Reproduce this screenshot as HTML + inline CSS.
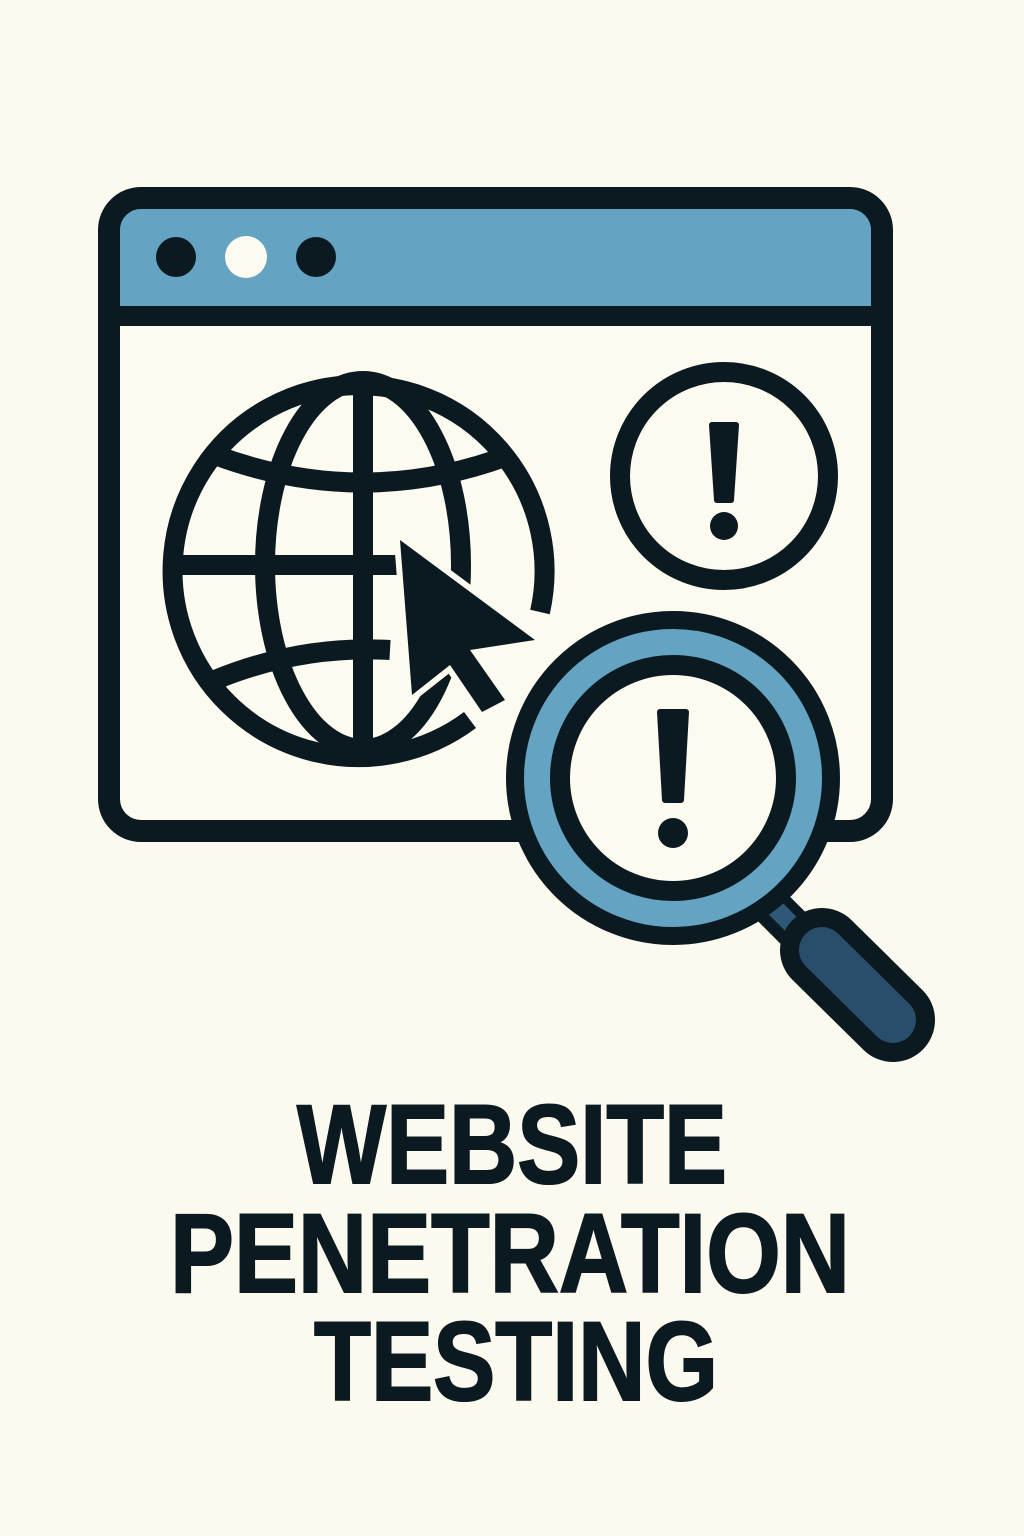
<!DOCTYPE html>
<html><head><meta charset="utf-8"><style>
html,body{margin:0;padding:0;background:#fcf9ee;}
svg{display:block}
</style></head><body>
<svg width="1024" height="1536" viewBox="0 0 1024 1536" xmlns="http://www.w3.org/2000/svg">
<rect width="1024" height="1536" fill="#fcf9ee"/>
<!-- browser window -->
<rect x="109" y="198" width="773" height="633" rx="32" fill="#fdfaf0"/>
<path d="M120 230 Q120 209 141 209 L850 209 Q871 209 871 230 L871 306 L120 306 Z" fill="#64a3c2"/>
<rect x="109" y="198" width="773" height="633" rx="32" fill="none" stroke="#0b1a20" stroke-width="22"/>
<line x1="109" y1="316" x2="882" y2="316" stroke="#0b1a20" stroke-width="20"/>
<circle cx="176" cy="257" r="20" fill="#0b1a20"/>
<circle cx="246" cy="257" r="21" fill="#fdfaf0"/>
<circle cx="316" cy="257" r="20" fill="#0b1a20"/>
<!-- globe -->
<g fill="none" stroke="#0b1a20" stroke-width="20">
<path d="M540 612 A186 186 0 1 0 470 720"/>
<ellipse cx="363" cy="565" rx="98" ry="184"/>
<line x1="363" y1="381" x2="363" y2="750"/>
<line x1="178" y1="565" x2="400" y2="565"/>
<path d="M215 455 Q363 510 510 455"/>
<path d="M215 680 Q300 645 390 650"/>
</g>
<!-- cursor -->
<path d="M400 540 L535 640 L470 650 L505 700 L482 712 L450 665 L412 695 Z" fill="#0b1a20" stroke="#fdfaf0" stroke-width="12" stroke-linejoin="round"/>
<path d="M400 540 L535 640 L470 650 L505 700 L482 712 L450 665 L412 695 Z" fill="#0b1a20"/>
<!-- exclamation circle -->
<circle cx="724" cy="476" r="104" fill="#fdfaf0" stroke="#0b1a20" stroke-width="20"/>
<path d="M712 425 L736 425 L731 500 L717 500 Z" fill="#0b1a20" stroke="#0b1a20" stroke-width="6" stroke-linejoin="round"/>
<circle cx="724" cy="526" r="14" fill="#0b1a20"/>
<!-- magnifier handle -->
<line x1="770" y1="905" x2="800" y2="935" stroke="#0b1a20" stroke-width="40"/>
<line x1="775" y1="908" x2="797" y2="930" stroke="#2e5878" stroke-width="18"/>
<line x1="822" y1="950" x2="893" y2="1020" stroke="#0b1a20" stroke-width="84" stroke-linecap="round"/>
<line x1="822" y1="950" x2="893" y2="1020" stroke="#2a4d6a" stroke-width="46" stroke-linecap="round"/>
<!-- magnifier lens -->
<circle cx="673" cy="778" r="158" fill="#64a3c2" stroke="#0b1a20" stroke-width="18"/>
<circle cx="673" cy="778" r="113" fill="#fdfaf0" stroke="#0b1a20" stroke-width="20"/>
<path d="M660 712 L686 712 L681 800 L665 800 Z" fill="#0b1a20" stroke="#0b1a20" stroke-width="6" stroke-linejoin="round"/>
<circle cx="673" cy="833" r="15" fill="#0b1a20"/>
<!-- text -->
<g font-family="Liberation Sans, sans-serif" font-weight="bold" font-size="112" fill="#0b1a20" text-anchor="middle" stroke="#0b1a20" stroke-width="2">
<text x="512" y="1183" textLength="430" lengthAdjust="spacingAndGlyphs">WEBSITE</text>
<text x="510" y="1292" textLength="680" lengthAdjust="spacingAndGlyphs">PENETRATION</text>
<text x="516" y="1400" textLength="404" lengthAdjust="spacingAndGlyphs">TESTING</text>
</g>
</svg>
</body></html>
